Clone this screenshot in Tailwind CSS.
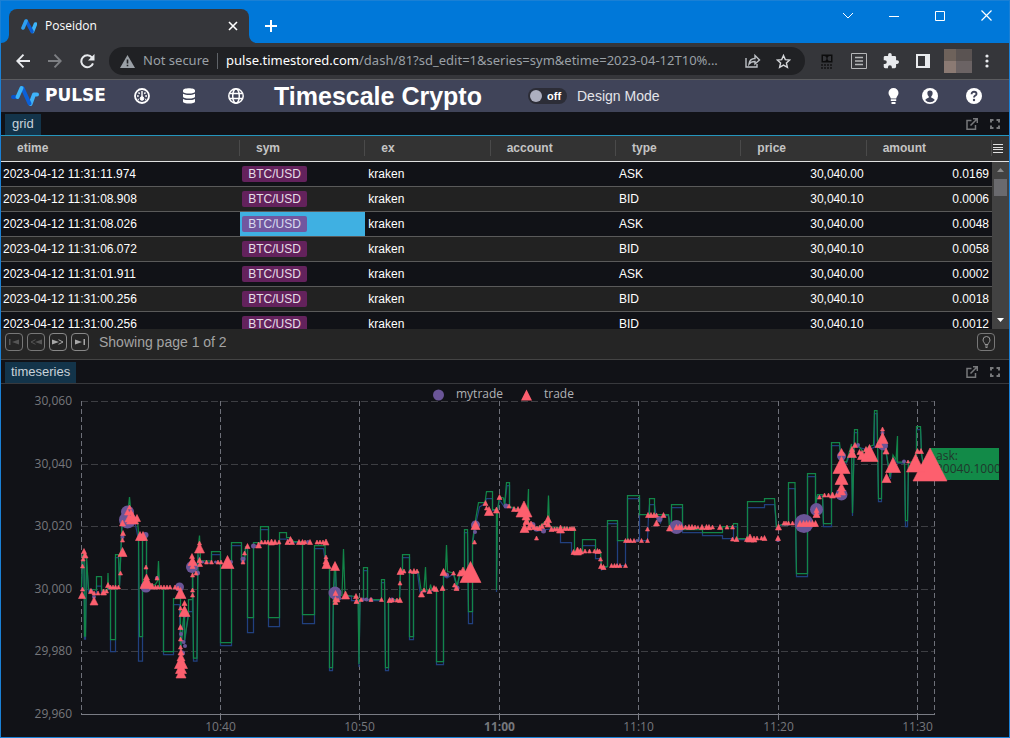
<!DOCTYPE html>
<html lang="en">
<head>
  <meta charset="UTF-8" />
  <meta name="viewport" content="width=device-width, initial-scale=1" />
  <title>Poseidon</title>
  <script src="https://cdn.jsdelivr.net/npm/@tailwindcss/browser@4"></script>
</head>
<body class="bg-[#111217] font-['Liberation_Sans',Arial,sans-serif]">
<div class="min-h-screen flex flex-col border border-[#1a80d5]">

  <!-- Title bar -->
  <header class="h-[42px] flex items-start bg-[#0078d9] text-white">
    <div class="relative ml-2 mt-2 w-60 h-[34px] flex items-center pl-3 pr-2 rounded-t-lg bg-[#35363a]">
      <svg class="absolute -left-2 bottom-0" width="8" height="8" viewBox="0 0 8 8"><path d="M8 0v8H0a8 8 0 0 0 8-8z" fill="#35363a"/></svg>
      <svg class="absolute -right-2 bottom-0" width="8" height="8" viewBox="0 0 8 8"><path d="M0 0v8h8a8 8 0 0 1-8-8z" fill="#35363a"/></svg>
      <svg width="16" height="16" viewBox="0 0 16 16" fill="none" stroke-width="3.6" stroke-linecap="round">
        <path d="M11.500 13.500L14.500 6" stroke="#3db4f7"/>
        <path d="M5.500 3.500L11 13.500" stroke="#0b5bd0"/>
        <path d="M2 10L5 3" stroke="#2f9ff0"/>
      </svg>
      <span class="ml-2 flex-1 text-[12px] font-['Open_Sans',sans-serif]">Poseidon</span>
      <button aria-label="Close tab" class="w-4 h-4 flex items-center justify-center">
        <svg width="10" height="10" viewBox="0 0 10 10" stroke="#fff" stroke-width="1.600"><path d="M1 1l8 8M9 1L1 9"/></svg>
      </button>
    </div>
    <button aria-label="New tab" class="ml-2 mt-2 w-7 h-[34px] flex items-center justify-center">
      <svg width="12" height="12" viewBox="0 0 12 12" stroke="#fff" stroke-width="2"><path d="M6 0v12M0 6h12"/></svg>
    </button>
    <div class="ml-auto flex h-[29px]">
      <button aria-label="Search tabs" class="w-[46px] flex items-center justify-center"><svg width="12" height="8" viewBox="0 0 12 8" fill="none" stroke="#fff"><path d="M1 1l5 5 5-5"/></svg></button>
      <button aria-label="Minimise" class="w-[46px] flex items-center justify-center"><svg width="10" height="10" viewBox="0 0 10 10" stroke="#fff"><path d="M0 5.500h10"/></svg></button>
      <button aria-label="Maximise" class="w-[46px] flex items-center justify-center"><svg width="10" height="10" viewBox="0 0 10 10" fill="none" stroke="#fff"><path d="M.5.5h9v9h-9z"/></svg></button>
      <button aria-label="Close" class="w-[46px] flex items-center justify-center"><svg width="11" height="11" viewBox="0 0 11 11" stroke="#fff" stroke-width="1.200"><path d="M.5.5l10 10M10.500.5l-10 10"/></svg></button>
    </div>
  </header>

  <!-- Address bar -->
  <div class="h-[37px] flex items-center pl-[6px] pr-[7px] bg-[#35363a] border-b border-[#5b5c5f]">
    <button aria-label="Back" class="w-8 flex justify-center"><svg width="14" height="14" viewBox="0 0 14 14" fill="none" stroke="#e8eaed" stroke-width="1.900"><path d="M14 7H1.500M7.500.7L1.300 7l6.200 6.300"/></svg></button>
    <button aria-label="Forward" class="w-8 flex justify-center"><svg width="14" height="14" viewBox="0 0 14 14" fill="none" stroke="#7d7f83" stroke-width="1.900"><path d="M0 7h12.500M6.500.7L12.700 7l-6.200 6.300"/></svg></button>
    <button aria-label="Reload" class="w-8 flex justify-center"><svg width="15" height="15" viewBox="0 0 15 15" fill="none" stroke="#e8eaed" stroke-width="2"><path d="M13 9.300A6 6 0 1 1 12 3.500"/><path d="M14.500 0v6.500H8z" fill="#e8eaed" stroke="none"/></svg></button>
    <div class="ml-[6px] mr-[6px] h-7 flex-1 min-w-0 flex items-center rounded-full bg-[#202124] pl-[11px] pr-2 text-[13px] font-['Noto_Sans',sans-serif]">
      <svg width="15" height="13" viewBox="0 0 15 13"><path d="M7.500 0L15 13H0z" fill="#9aa0a6"/><path d="M6.700 4.500h1.600v4H6.700zM6.700 9.700h1.600v1.600H6.700z" fill="#202124"/></svg>
      <span class="ml-2 text-[#9aa0a6] whitespace-nowrap">Not secure</span>
      <span class="mx-2 h-4 w-px bg-[#5f6368]"></span>
      <label for="url" class="text-white whitespace-nowrap">pulse.timestored.com</label>
      <input id="url" type="text" value="/dash/81?sd_edit=1&amp;series=sym&amp;etime=2023-04-12T10%..." class="flex-1 min-w-0 bg-transparent text-[#9aa0a6] outline-none" />
      <button aria-label="Share" class="w-8 flex justify-center"><svg width="16" height="14" viewBox="0 0 16 14" fill="none" stroke="#bdc1c6" stroke-width="1.400"><path d="M1 4v9h11v-3"/><path d="M4 10c.5-4 3-5.500 6-5.500V1.500L14.500 6 10 10V7.500C7.500 7.500 5.500 8 4 10z"/></svg></button>
      <button aria-label="Bookmark" class="w-7 flex justify-center"><svg width="15" height="15" viewBox="0 0 15 15" fill="none" stroke="#d5d7da" stroke-width="1.400"><path d="M7.500 1.500l1.800 4.100 4.400.4-3.300 3 1 4.400-3.900-2.300-3.900 2.300 1-4.400-3.300-3 4.400-.4z"/></svg></button>
    </div>
    <button aria-label="Dolby video" class="w-8 flex justify-center"><svg width="12" height="15" viewBox="0 0 12 15"><path d="M.5.5h11v8H.5z" fill="#0c0c0d"/><path d="M2 2h1a2.500 2.500 0 0 1 0 5H2zM10 2H9a2.500 2.500 0 0 0 0 5h1z" fill="#35363a"/><path d="M0 11h12M0 14h12" stroke="#131314" stroke-width="1.500" stroke-dasharray="2 1"/></svg></button>
    <button aria-label="Reader" class="w-8 flex justify-center"><svg width="16" height="16" viewBox="0 0 16 16" fill="none" stroke="#b5b6b8"><path d="M.5.500h15v15H.5z"/><path d="M4 4.500h8M4 8h8M4 11.500h8" stroke-width="1.500"/></svg></button>
    <button aria-label="Extensions" class="w-8 flex justify-center"><svg width="16" height="16" viewBox="1 1 22 22" fill="#e8eaed"><path d="M20.500 11H19V7a2 2 0 0 0-2-2h-4V3.500a2.500 2.500 0 0 0-5 0V5H4a2 2 0 0 0-2 2v3.800h1.500a2.700 2.700 0 0 1 0 5.400H2V20a2 2 0 0 0 2 2h3.800v-1.500a2.700 2.700 0 0 1 5.400 0V22H17a2 2 0 0 0 2-2v-4h1.500a2.500 2.500 0 0 0 0-5z"/></svg></button>
    <button aria-label="Side panel" class="w-8 flex justify-center"><svg width="14" height="14" viewBox="0 0 14 14"><path d="M0 0h14v14H0z" fill="#e8eaed"/><path d="M2 2h7v10H2z" fill="#35363a"/></svg></button>
    <div class="ml-[5px] w-7 h-6 grid grid-cols-[12px_16px] grid-rows-2">
      <span class="bg-[#6e625b]"></span><span class="bg-[#5a5352]"></span>
      <span class="bg-[#8b7a73]"></span><span class="bg-[#6b6364]"></span>
    </div>
    <button aria-label="Menu" class="w-[30px] flex justify-center"><svg width="4" height="14" viewBox="0 0 4 14" fill="#e8eaed"><circle cx="2" cy="2" r="1.600"/><circle cx="2" cy="7" r="1.600"/><circle cx="2" cy="12" r="1.600"/></svg></button>
  </div>

  <!-- Pulse navbar -->
  <nav class="h-8 flex items-center pl-[10px] bg-[#404459] text-white">
    <a href="#" class="flex items-center gap-[6px]">
      <svg width="28" height="22" viewBox="0 0 28 22" fill="none" stroke-width="4" stroke-linecap="round" stroke-linejoin="round">
        <path d="M2 12h4.500" stroke="#0a55cc"/>
        <path d="M19.500 19l3.500-9.500h3" stroke="#3fb3f8"/>
        <path d="M11.500 3l7 15.500" stroke="#0b60d8"/>
        <path d="M6.500 12l4-9" stroke="#3db4f7"/>
      </svg>
      <span class="w-[82px] font-['DejaVu_Sans',sans-serif] text-[17px] font-bold">PULSE</span>
    </a>
    <a href="#" aria-label="Dashboards" class="w-[47px] pl-[3px]"><svg width="16" height="16" class="ml-1" viewBox="0 0 16 16" fill="none" stroke="#fff"><circle cx="8" cy="8" r="7" stroke-width="1.800"/><path d="M8 3v6" stroke-width="1.400"/><circle cx="8" cy="10.500" r="1.800" fill="#fff"/><path d="M3 8h1.800M11.200 8H13M4.500 4.500l1.200 1.200M11.500 4.500l-1.200 1.200M3.800 11.500h1M11.200 11.500h1" stroke-width="1.500"/></svg></a>
    <a href="#" aria-label="Connections" class="w-[47px]"><svg width="14" height="16" class="ml-2" viewBox="0 0 14 16" fill="#fff"><path d="M1 2.500C1 1 4 .3 7 .3s6 .7 6 2.200v1C13 5 10 5.500 7 5.500S1 5 1 3.500zM1 5.800c1.500 1 4 1.200 6 1.200s4.500-.2 6-1.200v2.700c0 1.400-3 2-6 2s-6-.6-6-2zM1 10.900c1.500 1 4 1.200 6 1.200s4.500-.2 6-1.200v2.500c0 1.400-3 2.200-6 2.200s-6-.8-6-2.200z"/></svg></a>
    <a href="#" aria-label="Public" class="w-[53px]"><svg width="16" height="16" class="ml-[7px]" viewBox="0 0 16 16" fill="none" stroke="#fff" stroke-width="1.500"><circle cx="8" cy="8" r="7.200"/><ellipse cx="8" cy="8" rx="3.300" ry="7.200"/><path d="M1.300 5.500h13.400M1.300 10.500h13.400"/></svg></a>
    <h1 class="w-[254px] text-[25px] font-bold leading-8 whitespace-nowrap pb-px">Timescale Crypto</h1>
    <label class="flex items-center gap-[10px] text-[14px] whitespace-nowrap">
      <input type="checkbox" class="peer sr-only" />
      <span class="w-[39px] h-4 flex items-center gap-[5px] rounded-full bg-[#2c2d37] pl-[2px] text-[11px] font-bold"><span class="w-3 h-3 rounded-full bg-[#adafbf]"></span>off</span>
      <span class="text-[#e4e5ea]">Design Mode</span>
    </label>
    <div class="ml-auto flex items-center pr-[27px]">
      <a href="#" aria-label="Tips" class="w-[29px]"><svg width="11" height="17" viewBox="0 0 11 17" fill="#fff"><path d="M5.500 0A5 5 0 0 0 .5 5c0 2.300 1.800 3.500 2.300 5.500h5.400c.5-2 2.300-3.200 2.300-5.500a5 5 0 0 0-5-5zM2.800 11.300h5.400V13H2.800zM3.500 14h4v2h-4z"/></svg></a>
      <a href="#" aria-label="Account" class="w-[49px] pl-[5px]"><svg width="16" height="16" viewBox="0 0 16 16"><circle cx="8" cy="8" r="8" fill="#fff"/><path d="M8 2.500c-2 0-2.800 1.400-2.600 3 .1 1.300.6 2.300 1.300 2.800v1.400c-.9.500-2.900.8-3.500 2.300a6.200 6.200 0 0 0 9.600 0c-.6-1.500-2.600-1.800-3.500-2.300V8.300c.7-.5 1.200-1.500 1.300-2.800.2-1.600-.6-3-2.600-3z" fill="#404459"/></svg></a>
      <a href="#" aria-label="Help" class="w-4"><svg width="16" height="16" viewBox="0 0 16 16"><circle cx="8" cy="8" r="8" fill="#fff"/><path d="M5.600 6.200C5.600 4.600 6.600 3.800 8 3.800s2.500.8 2.500 2.100C10.500 7.600 8 7.600 8 9.500" fill="none" stroke="#404459" stroke-width="1.900"/><circle cx="8" cy="12" r="1.200" fill="#404459"/></svg></a>
    </div>
  </nav>

  <!-- Grid panel -->
  <section>
    <div class="h-6 flex items-end border-b border-[#2596be] pl-1 pr-2">
      <button class="h-[21px] px-[7px] pb-[2px] bg-[#13344a] text-[#c9d2d9] text-[13px] leading-[19px]">grid</button>
      <div class="ml-auto h-[22px] flex items-center gap-[11px] text-[#77787b]">
        <button aria-label="Pop out grid"><svg width="12" height="12" viewBox="0 0 12 12" fill="none" stroke="currentColor" stroke-width="1.500"><path d="M5.500 2.500H1v8.700h8.500V7"/><path d="M4.500 7.500L10.500 1.500M7 .8h4.300V5"/></svg></button>
        <button aria-label="Maximise grid"><svg width="12" height="12" viewBox="0 0 12 12" fill="none" stroke="currentColor" stroke-width="2"><path d="M2 4.500V2h2.500M7.500 2H10v2.500M10 7.500V10H7.500M4.500 10H2V7.500"/></svg></button>
      </div>
    </div>

    <div class="flex">
      <div class="flex-1 min-w-0 h-[193px] overflow-hidden">
        <table class="w-full table-fixed text-[12px] text-white">
          <thead>
            <tr class="h-[25px] bg-[#333333] border-b border-[#e0e0e0] text-left text-[#c4c4c4]">
              <th class="w-[239px] pl-4"><div class="h-4 leading-4 border-r border-[#4a4a4a]">etime</div></th>
              <th class="pl-4"><div class="h-4 leading-4 border-r border-[#4a4a4a]">sym</div></th>
              <th class="pl-4"><div class="h-4 leading-4 border-r border-[#4a4a4a]">ex</div></th>
              <th class="pl-4"><div class="h-4 leading-4 border-r border-[#4a4a4a]">account</div></th>
              <th class="pl-4"><div class="h-4 leading-4 border-r border-[#4a4a4a]">type</div></th>
              <th class="pl-4"><div class="h-4 leading-4 border-r border-[#4a4a4a]">price</div></th>
              <th class="pl-4"><div class="h-4 leading-4 border-r border-[#4a4a4a]">amount</div></th>
            </tr>
          </thead>
          <tbody id="rows"></tbody>
        </table>
      </div>
      <div class="w-[17px] flex flex-col">
        <button aria-label="Columns" class="h-[26px] flex items-center pl-px bg-[#333333] border-b border-[#e0e0e0]"><svg width="10" height="10" viewBox="0 0 10 10" stroke="#e0e0e0" stroke-width="1"><path d="M0 .5h10M0 3.500h10M0 5.500h10M0 8.500h10"/></svg></button>
        <div class="flex-1 flex flex-col items-center bg-[#424242]">
          <svg class="my-[6px]" width="7" height="5" viewBox="0 0 7 5"><path d="M3.500 0L7 4H0z" fill="#8b8b8b"/></svg>
          <span class="w-[13px] h-[17px] bg-[#6a6a6e]"></span>
          <svg class="mt-auto mb-[6px]" width="7" height="5" viewBox="0 0 7 5"><path d="M0 0h7L3.500 4z" fill="#fff"/></svg>
        </div>
      </div>
    </div>

    <div class="h-[31px] flex items-start gap-1 pl-1 pr-[14px] pt-1 bg-[#252525] border-b border-[#444444]">
      <button disabled aria-label="First page" class="w-[18px] h-[18px] flex items-center justify-center border border-[#777] rounded text-[#555]"><svg width="10" height="6" viewBox="0 0 10 6" fill="currentColor"><path d="M0 0h1.500v6H0zM10 .5v5L3 3z"/></svg></button>
      <button disabled aria-label="Previous page" class="w-[18px] h-[18px] flex items-center justify-center border border-[#777] rounded text-[#555]"><svg width="12" height="6" viewBox="0 0 12 6" fill="currentColor"><path d="M12 .5v5L5 3z"/><path d="M5.500.7L1 3l4.500 2.300" fill="none" stroke="currentColor"/></svg></button>
      <button aria-label="Next page" class="w-[18px] h-[18px] flex items-center justify-center border border-[#888] rounded text-[#a8a8a8]"><svg width="12" height="6" viewBox="0 0 12 6" fill="currentColor"><path d="M0 .5v5L7 3z"/><path d="M6.500.7L11 3 6.500 5.300" fill="none" stroke="currentColor"/></svg></button>
      <button aria-label="Last page" class="w-[18px] h-[18px] flex items-center justify-center border border-[#888] rounded text-[#a8a8a8]"><svg width="10" height="6" viewBox="0 0 10 6" fill="currentColor"><path d="M8.500 0H10v6H8.500zM0 .5v5L7 3z"/></svg></button>
      <p class="pl-[6px] text-[14px] leading-[18px] text-[#a3a3a3]">Showing page 1 of 2</p>
      <button aria-label="Hint" class="ml-auto w-[18px] h-[18px] flex items-center justify-center border border-[#777] rounded text-[#999]"><svg width="9" height="12" viewBox="0 0 9 12" fill="none" stroke="currentColor"><path d="M3 8.500C3 7 1 6 1 4a3.500 3.500 0 0 1 7 0c0 2-2 3-2 4.500zM3 10h3M3.500 11.500h2"/></svg></button>
    </div>
  </section>

  <!-- Timeseries panel -->
  <section class="flex-1 flex flex-col">
    <div class="h-6 flex items-end border-b border-[#38393d] pl-1 pr-2">
      <button class="h-[21px] px-[6px] pb-[2px] bg-[#13344a] text-[#c9d2d9] text-[13px] leading-[19px]">timeseries</button>
      <div class="ml-auto h-[22px] flex items-center gap-[11px] text-[#77787b]">
        <button aria-label="Pop out timeseries"><svg width="12" height="12" viewBox="0 0 12 12" fill="none" stroke="currentColor" stroke-width="1.500"><path d="M5.500 2.500H1v8.700h8.500V7"/><path d="M4.500 7.500L10.500 1.500M7 .8h4.300V5"/></svg></button>
        <button aria-label="Maximise timeseries"><svg width="12" height="12" viewBox="0 0 12 12" fill="none" stroke="currentColor" stroke-width="2"><path d="M2 4.500V2h2.500M7.500 2H10v2.500M10 7.500V10H7.500M4.500 10H2V7.500"/></svg></button>
      </div>
    </div>
    <svg id="chart" class="w-full font-['Open_Sans',sans-serif]" viewBox="1 384 1008 353"></svg>
  </section>
</div>

<script>
  // ---- table rows ----
  const trades = [
    ['2023-04-12 11:31:11.974', 'ASK', '30,040.00', '0.0169'],
    ['2023-04-12 11:31:08.908', 'BID', '30,040.10', '0.0006'],
    ['2023-04-12 11:31:08.026', 'ASK', '30,040.00', '0.0048'],
    ['2023-04-12 11:31:06.072', 'BID', '30,040.10', '0.0058'],
    ['2023-04-12 11:31:01.911', 'ASK', '30,040.00', '0.0002'],
    ['2023-04-12 11:31:00.256', 'BID', '30,040.10', '0.0018'],
    ['2023-04-12 11:31:00.256', 'BID', '30,040.10', '0.0012'],
  ];
  const selectedRow = 2;

  document.getElementById('rows').innerHTML = trades.map(([etime, type, price, amount], i) => `
    <tr class="h-[25px] border-b border-[#5a5a5a] odd:bg-[#111217] even:bg-[#222222]">
      <td class="px-[2px]">${etime}</td>
      <td class="px-[2px] ${i === selectedRow ? 'bg-[#3fb0e2]' : ''}">
        <span class="block w-[65px] h-4 rounded-xs text-center leading-4 ${i === selectedRow ? 'bg-[#72579f] text-[#d8dcef]' : 'bg-[#63225c] text-[#e6dfe6]'}">BTC/USD</span>
      </td>
      <td class="px-[3px]">kraken</td>
      <td class="px-[3px]"></td>
      <td class="px-[3px]">${type}</td>
      <td class="px-[3px] text-right">${price}</td>
      <td class="px-[3px] text-right">${amount}</td>
    </tr>`).join('');

  // ---- chart ----
  const ask = '81.5,587 82.5,556 84,553 84.5,636 85.5,636 86.5,557 88.5,589 96.5,590 96.5,576.5 101.5,576.5 101.5,590 107.5,590 108,573 108.5,588 110.5,588 110.5,639.5 115.5,639.5 115.5,554.5 118.5,554.5 119.5,586 122,523 127.5,517 129.5,497 131,513 137.5,520 138.5,533 139.5,636.5 142.5,636.5 142.5,537 146.5,537 146.5,583 155,585 157.5,581 158.5,561 159.5,587.5 163.5,587.5 163.5,651.5 173.5,651.5 173.5,598.5 180.5,598.5 180.5,650 184.5,607 184.5,640 188.5,615 188.5,599.5 192.5,599.5 192.5,560 193.5,658 197,658 198,550 199.5,535.5 200.5,560.5 211.5,561 211.5,551.5 220.5,551.5 220.5,642.5 231.5,642.5 231.5,542.5 241.5,542.5 241.5,560 244.5,560 245.5,546.5 247.5,547 247.5,617.5 253.5,617.5 253.5,542.5 260.5,542.5 260.5,526.5 268.5,526.5 268.5,617.5 279.5,617.5 279.5,532.5 286.5,532.5 286.5,537.5 290,537.5 293.5,541.5 302.5,541.5 302.5,614.5 314.5,614.5 314.5,545.5 325,545.5 325.5,563 329.5,567 329.5,667.5 332.5,667.5 333.5,590 334.5,567 335.5,567 336.5,598 342,595 343.5,549 345,595 351.5,596 358,597 359,664 360,599.5 363.5,599.5 363.5,567.5 367.5,567.5 367.5,599.5 381.5,599.5 381.5,579.5 384.5,579.5 385.5,667.5 388.5,667.5 388.5,599.5 399.5,599.5 400.5,571.5 402.5,571.5 402.5,554.5 409.5,554.5 409.5,636.5 413.5,636.5 413.5,571.5 418.5,571.5 421,590 424,590 425.5,567 426.5,590 429.5,590 430.5,584.5 431.5,589 436.5,589 436.5,661.5 443.5,661.5 443.5,573 445.5,570 446.5,545 447.5,571.5 453.5,573 457,586 460,573 464.5,573 464.5,529.5 467.5,529.5 468.5,611.5 472.5,611.5 472.5,541.5 475,523 478.5,502.5 485,502.5 486.5,491.5 492.5,491.5 492.5,509.5 496.5,509.5 496.5,590 497.5,510 499.5,497 503.5,498 504.5,506 506.5,482.5 509.5,482.5 509.5,506.5 518,509 527.5,510 528.5,489 528.5,523 537,528 547.5,520 548.5,495.5 549.5,527 574.5,528 574.5,551.5 582.5,551.5 582.5,539.5 595.5,539.5 595.5,551.5 600.5,551.5 601.5,566.5 607.5,566.5 607.5,520.5 617.5,520.5 617.5,540.5 627.5,540.5 627.5,495.5 639.5,495.5 639.5,514.5 649.5,514.5 649.5,498.5 654.5,498.5 654.5,514.5 668.5,514.5 669.5,527.5 671.5,527.5 671.5,504.5 682.5,504.5 682.5,529.5 702.5,529.5 702.5,532.5 722.5,532.5 722.5,526.5 733,526.5 733.5,523.5 737.5,523.5 737.5,538.5 747.5,538.5 747.5,501.5 764.5,501.5 764.5,498.5 774.5,498.5 776.5,527 781.5,524.5 788.5,524.5 788.5,482.5 795,482.5 796.5,573.5 807.5,573.5 807.5,473.5 815.5,473.5 815.5,505 817.5,494.5 822.5,494.5 823.5,523.5 831.5,523.5 831.5,442.5 839.5,442.5 841,460 846.5,462 851.5,444 852.5,513 854.5,429.5 857.5,429.5 857.5,445 863.5,452 868.5,447 873.5,445 874.5,410.5 877,410.5 878.5,498.5 881.5,498.5 882,430 886,450 890,477 893,455 896,460 897.500,436 897.5,462 904.5,462 905.5,520.5 907.5,520.5 908.5,462 916.5,462 916.5,426.5 920.5,426.5 921.5,453 923.5,465 930,464';
  const bid = '81.5,590 82.5,560 84,555 84.5,639 85.5,639 86.5,560 88.5,592 96.5,593 96.5,586 101.5,586 101.5,593 110.5,588 110.5,651.5 115.5,651.5 115.5,557.5 118.5,557.5 119.5,586 122,527 129.5,512 134.5,520 138.5,540 138.5,661 142.5,661 142.5,540 146.5,540 146.5,586 155,588 163.5,588 163.5,654.5 173.5,654.5 173.5,604.5 179.5,604.5 180.5,655 184.5,611 184.5,644 188.5,611.5 192.5,611.5 192.5,564 193.5,661 197,661 198,555 200.5,562 211.5,562.5 211.5,554.5 220.5,554.5 220.5,645.5 231.5,645.5 231.5,545.5 241.5,545.5 241.5,562 244.5,562 245.5,548.5 247.5,549 247.5,632.5 253.5,632.5 253.5,545.5 260.5,545.5 260.5,529.5 268.5,529.5 268.5,626.5 279.5,626.5 279.5,539 286.5,539 293.5,542.5 302.5,542.5 302.5,623.5 314.5,623.5 314.5,548.5 323.5,548.5 325.5,563 329.5,569 329.5,670.5 332.5,670.5 333.5,593 335.5,570 336.5,600 345,598 351.5,596 351.5,600.5 358.500,600.5 359,667 360,600.5 363.5,600.5 363.5,570.5 367.5,570.5 367.5,600.5 381.5,600.5 381.5,582.5 384.5,582.5 385.5,670.5 388.5,670.5 388.5,600.5 399.5,600.5 400.5,572.5 402.5,572.5 402.5,557.5 409.5,557.5 409.5,639.5 413.5,639.5 413.5,573 417.5,573 420,592 429.5,591.5 436.5,590 436.5,664.5 443.5,664.5 443.5,576 447,578 453.5,574 457,588 460,574 464.5,574 464.5,532.5 467.5,532.5 468.5,623.5 472.5,623.5 472.5,545 475,527 479.5,507 485,503.5 486.5,498.5 492.5,498.5 492.5,510.5 496.5,510.5 496.5,592 497.5,511 499.5,500 504.5,507 507,485.5 509.5,485.5 509.5,507.5 527.5,511 528.5,525 537,531 549.5,529 560.5,529 560.5,542.5 571.5,542.5 571.5,552.5 582.5,552.5 582.5,545.5 595.5,545.5 595.5,558.5 600.5,558.5 601.5,570 607.5,566.5 607.5,523.5 617.5,523.5 617.5,565.5 625.5,565.5 625.5,540.5 627.5,540.5 627.5,498.5 639.5,498.5 639.5,540.5 647.5,540.5 648.5,515.5 649.5,504.5 654.5,504.5 656.5,518 660.5,523 662.5,515.5 668.5,515.5 671.5,527.5 671.5,507.5 682.5,507.5 682.5,532.5 702.5,532.5 702.5,535.5 722.5,535.5 722.5,538.5 733.5,538.5 733.5,526.5 737.5,526.5 737.5,539.5 747.5,539.5 747.5,507.5 764.5,507.5 764.5,504.5 774.5,504.5 776.5,528 781.5,525 788.5,525 788.5,488.5 795,488.5 796.5,576.5 807.5,576.5 807.5,476.5 815.5,476.5 815.5,507 817.5,496 822.5,496 823.5,526.5 831.5,526.5 831.5,445.5 839.5,445.5 841,462 846.5,463 851.5,450 852.5,516 854.5,432.5 857.5,432.5 857.5,447 868.5,450 874.5,447 874.5,413.5 877,413.5 878.5,501.5 881.5,501.5 882,435 886,453 890.5,479 893,458 897.5,463 904.5,463 905.5,526.5 907.5,526.5 908.5,463 916.5,463 916.5,429.5 920.5,429.5 921.5,455 923.5,466 930,465';

  // markers: [x, y, size]
  const mytrade = [[127.5,520,17],[127.5,512,13],[122.5,537,4],[145.5,535,6],[146,587,11],[157,578,4],[91,591,4],[94,597,4],[179.5,587,9],[184.5,615,5],[181,634,4],[183.5,642,4],[185,646,4],[182.5,653,5],[192,567,12],[197.5,573,5],[202.5,562,3],[215.5,562,3],[231,562,4],[243,559,5],[253.5,546,5],[308,542,4],[335,593,13],[338.5,598,5],[363,599.5,4],[366.5,599.5,4],[371,599.5,4],[392,600,5],[410,571.500,3],[446.5,575,5],[457,588,5],[475.5,525,9],[475,532,4],[506,506,5],[532.5,525,6],[536,529,5],[543.5,531,5],[659.5,519,6],[637,540.500,3],[676.5,527,14],[778,540,4],[804,523.5,19],[816.5,509.5,13],[841.5,494.5,12],[841.5,456,9],[858,445,4],[883,445.5,10],[882.5,433,4],[904,461.5,4]];
  const trade = [[82,595,7],[82.5,589,4],[82.5,566,4],[84,551,5],[83,559,4],[85,555,6],[91,591,5],[94,601,8],[94,593,4],[98,593,4],[103.5,592,6],[106.5,591,4],[108,585,5],[110.5,587,4],[113,587,4],[115.5,587,4],[118.5,587,4],[120.5,573,4],[122.5,552,9],[122.5,540,4],[123,533,5],[122.5,523,6],[127.5,512,6],[129.5,507,4],[131,512,5],[132.5,518,12],[137,518,7],[129,518,8],[140,536,9],[143,536,9],[146,567,4],[146.5,577,6],[146.5,582,13],[157,578,4],[152,586,6],[155.5,587,4],[158,587,4],[161,587,4],[164,587,4],[167,587,4],[170,587,4],[175,587,4],[178,588,4],[180.5,593,11],[180.5,608,4],[184.5,603,5],[184.5,611,11],[180.5,627,5],[180.5,639,4],[180.5,647,4],[181,652,6],[181,657,8],[181,662,13],[181,668,11],[181,673,10],[192,556,5],[192.5,561,9],[192.5,566,5],[192.5,575,4],[192.5,590,4],[192.5,595,4],[199.500,543,4],[199.5,548,10],[199.5,560,5],[196,573,4],[200,564,5],[206.5,562,4],[211.5,562,4],[218,562,4],[221,562,4],[227.5,562,13],[243,562,4],[244.5,553,4],[247.5,546,5],[258.5,545,6],[261.5,542,4],[265,542,4],[268,542,4],[271.5,542,6],[275,542,5],[279,542,4],[287.500,542,5],[290.5,539,5],[292,542,5],[299,542,5],[302.5,542,5],[305,542,4],[310,542,5],[317,542,4],[320,542,4],[323,542,4],[326,542,6],[326,557,4],[326,561,6],[326.5,564,9],[335,566,9],[335.5,593,5],[335.5,599,5],[335.5,602,5],[338,600,4],[345.5,595,8],[356,596,5],[356.5,601,5],[361,599.5,4],[371,599.5,4],[381.5,599.5,4],[389.5,600,5],[392.500,600,4],[397,600,4],[400,600,5],[400,583,4],[400.5,571,7],[404,571,4],[410.5,571,4],[414,571,5],[417,571,4],[421.5,594,6],[424,590,4],[429.5,591,5],[434,588,5],[436,589,5],[442.5,588,5],[443.5,572,7],[453.5,573,4],[454.5,585,4],[456.5,588,5],[460,573,6],[463,571,8],[470.5,572,21],[475.5,525,9],[474.5,542,4],[485.5,503,5],[486.5,508,4],[489,511,9],[496.5,510,6],[499.5,497,5],[509,506,4],[514,509,5],[518,509,5],[524,509,16],[524.5,528,9],[526,516,8],[526.5,521,7],[529,527,6],[531,524,6],[534,527,5],[536.5,538,4],[537,528,4],[542,526,5],[545,523,4],[548,519,7],[548,524,6],[539.5,528,5],[551.5,529,5],[554.500,529,4],[557,529,4],[560.5,529,8],[564.5,528.5,4],[567,528.5,4],[570,528.5,4],[572,528.5,4],[574,528.5,4],[573.5,552,5],[577.5,551,8],[580.5,551,6],[585,551,4],[589.5,551,4],[594.5,551,4],[597.5,551,5],[599.5,551,4],[600.5,559,4],[601,566,5],[603.5,567,5],[611.5,565.5,4],[614.5,565.5,4],[617,565.5,4],[620,565.5,4],[625.5,565.5,4],[625.5,540.5,4],[628,540.5,4],[630.5,540.5,4],[634,540.5,4],[641.5,540.5,4],[647.5,540.5,4],[647.5,529,4],[648,515,5],[651,515,5],[654,515,5],[656.5,515,4],[656.5,523,6],[663.5,515,5],[669.5,528,6],[676.5,527,5],[679.5,527,5],[681.5,527,5],[685.5,527,4],[689,527,5],[692,527,5],[695,527,4],[698,527,3],[702,527,5],[706.5,527,5],[709,527,5],[712.5,527,4],[720,527,5],[727,527,4],[732.5,527,4],[732.5,539,4],[736.5,539,5],[747,539,5],[750,538,8],[754,539,6],[757,538,4],[761.5,538,4],[764.5,538,5],[778.5,527,6],[778,538,5],[784,523,4],[786,523,4],[788.5,523,4],[792.5,523,4],[800,523.5,6],[803.5,523.5,6],[806.5,523.5,6],[809.5,523.5,6],[812.5,523.5,6],[815.5,523.5,6],[816.5,510,5],[816.5,514,7],[819.5,497,4],[824.5,495,4],[828.5,495,4],[832.5,495,6],[836.5,495,4],[839,495,4],[841.5,491,8],[841.5,487,8],[841.5,478,13],[841.5,465,17],[841.5,452,7],[852,453,9],[852,449,5],[855,445,5],[859.5,452,5],[862,455,9],[866,449,5],[866,455,8],[869.5,453,17],[877.5,445,5],[880.5,445,5],[882.5,438,11],[882.5,429,4],[886,451,6],[886.5,478,9],[893,465,15],[908,461.5,3],[915.5,463,18],[917.5,451,5],[921,451,5]];

  const triangle = ([x, y, s]) => `M${x} ${y - s / 2}l${s / 2} ${s}h${-s}z`;
  const circle = ([x, y, s]) => `<circle cx="${x}" cy="${y}" r="${s / 2}"/>`;

  const yTicks = [['30,060', 401.5], ['30,040', 464.5], ['30,020', 526.5], ['30,000', 589.5], ['29,980', 651.5], ['29,960', 714.5]];
  const xTicks = [['10:40', 220.5], ['10:50', 359.5], ['11:00', 499.5], ['11:10', 638.5], ['11:20', 778.5], ['11:30', 917.5]];

  document.getElementById('chart').innerHTML = `
    <g stroke="#3d3e43" stroke-dasharray="7 3">
      ${yTicks.slice(0, 5).map(([, y]) => `<path d="M81 ${y}H935"/>`).join('')}
    </g>
    <g stroke="#6e7079" stroke-dasharray="5 3">
      ${[81.5, ...xTicks.map(t => t[1]), 934.5].map(x => `<path d="M${x} 401V714"/>`).join('')}
    </g>
    <path d="M81 714.5H935" stroke="#7a7c84"/>
    <g stroke="#7a7c84">${xTicks.map(([, x]) => `<path d="M${x} 715v5"/>`).join('')}</g>
    <g fill="#76777c" font-size="12">
      ${yTicks.map(([t, y]) => `<text x="72" y="${y + 3.5}" text-anchor="end">${t}</text>`).join('')}
      ${xTicks.map(([t, x]) => `<text x="${x}" y="731" text-anchor="middle" ${t === '11:00' ? 'font-weight="bold"' : ''}>${t}</text>`).join('')}
    </g>
    <g fill="none" stroke-width="1.25">
      <polyline points="${bid}" stroke="#21407f"/>
      <polyline points="${ask}" stroke="#128548"/>
    </g>
    <rect x="930" y="448" width="69" height="32" fill="#128a48"/>
    <clipPath id="tag"><path d="M930 448h69v32h-69z"/></clipPath>
    <g clip-path="url(#tag)" fill="#20372c" font-size="12">
      <text x="936" y="460">ask:</text>
      <text x="936" y="473">30040.1000</text>
    </g>
    <g fill="#6a5597">${mytrade.map(circle).join('')}</g>
    <path d="${trade.map(triangle).join('')}M930 448l17 33h-34z" fill="#fd5f6e" stroke="#fd5f6e" stroke-width=".6"/>
    <circle cx="438.500" cy="395" r="5.500" fill="#6a5597"/>
    <path d="M526.500 389.500l5.500 11h-11z" fill="#fd5f6e"/>
    <g fill="#b0b1b5" font-size="12"><text x="456" y="398">mytrade</text><text x="544" y="398">trade</text></g>`;
</script>
</body>
</html>
